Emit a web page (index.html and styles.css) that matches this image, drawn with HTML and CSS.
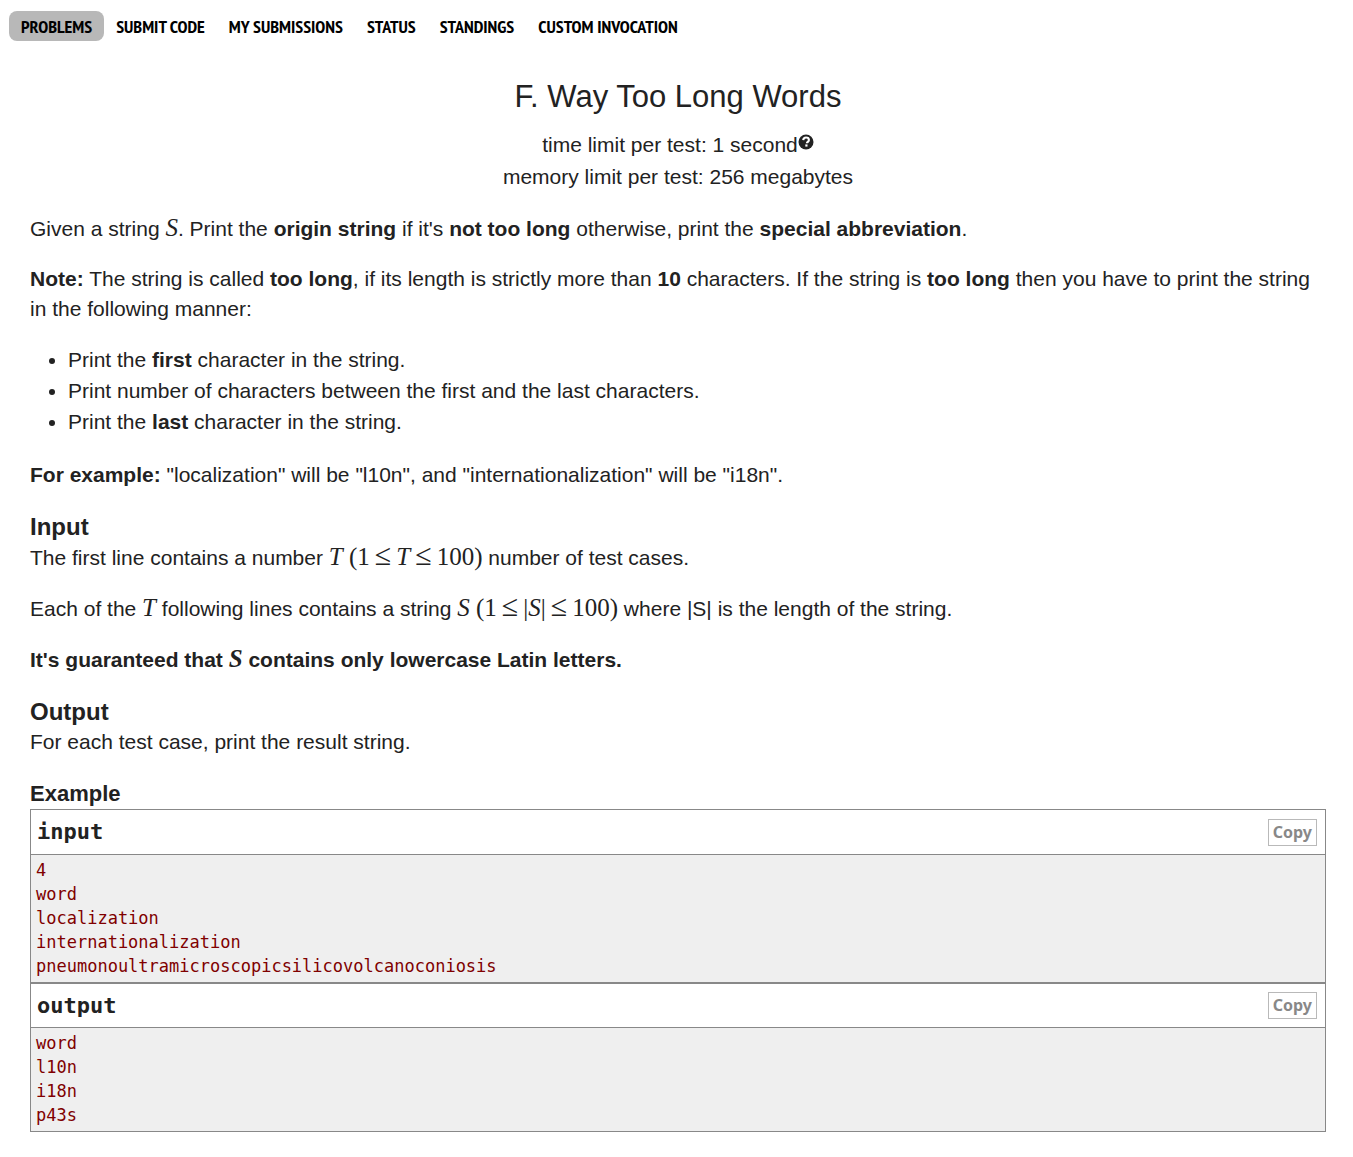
FILE: index.html
```html
<!DOCTYPE html>
<html lang="en">
<head>
<meta charset="utf-8">
<title>F. Way Too Long Words</title>
<link rel="stylesheet" href="styles.css">
</head>
<body>
<nav class="menu">
  <a class="menu-link current" href="#problems">PROBLEMS</a>
  <a class="menu-link" href="#submit">SUBMIT CODE</a>
  <a class="menu-link" href="#my">MY SUBMISSIONS</a>
  <a class="menu-link" href="#status">STATUS</a>
  <a class="menu-link" href="#standings">STANDINGS</a>
  <a class="menu-link" href="#invocation">CUSTOM INVOCATION</a>
</nav>
<main class="problem">
  <header class="problem-header">
    <h1 class="title">F. Way Too Long Words</h1>
    <div class="limit">time limit per test: 1 second<svg class="help" viewBox="0 0 16 16" role="img" aria-label="Help"><circle cx="8" cy="8" r="7.5" fill="#222"/><path d="M5.2 6.1C5.4 4.3 6.5 3.5 8 3.5c1.700 0 2.900 1 2.900 2.400 0 1.900-2 2-2 3.400" fill="none" stroke="#fff" stroke-width="2.100"/><rect x="7.300" y="10.400" width="2.200" height="2.200" fill="#fff"/></svg></div>
    <div class="limit">memory limit per test: 256 megabytes</div>
  </header>

  <section class="statement">
    <p>Given a string <i class="math">S</i>. Print the <b>origin string</b> if it's <b>not too long</b> otherwise, print the <b>special abbreviation</b>.</p>
    <p><b>Note:</b> The string is called <b>too long</b>, if its length is strictly more than <b>10</b> characters. If the string is <b>too long</b> then you have to print the string in the following manner:</p>
    <ul class="steps">
      <li>Print the <b>first</b> character in the string.</li>
      <li>Print number of characters between the first and the last characters.</li>
      <li>Print the <b>last</b> character in the string.</li>
    </ul>
    <p><b>For example:</b> "localization" will be "l10n", and "internationalization" will be "i18n".</p>
  </section>

  <section class="statement">
    <h2 class="section-title">Input</h2>
    <p>The first line contains a number <span class="math"><i>T</i> (1<span class="rel">≤</span><i>T</i><span class="rel">≤</span>100)</span> number of test cases.</p>
    <p>Each of the <i class="math">T</i> following lines contains a string <span class="math"><i>S</i> (1<span class="rel">≤</span>|<i>S</i>|<span class="rel">≤</span>100)</span> where |S| is the length of the string.</p>
    <p><b>It's guaranteed that <i class="math">S</i> contains only lowercase Latin letters.</b></p>
  </section>

  <section class="statement">
    <h2 class="section-title">Output</h2>
    <p>For each test case, print the result string.</p>
  </section>

  <section class="examples">
    <h2 class="example-title">Example</h2>
    <div class="sample">
      <div class="sample-head"><h3 class="sample-title">input</h3><button class="copy" type="button">Copy</button></div>
      <pre class="sample-text">4
word
localization
internationalization
pneumonoultramicroscopicsilicovolcanoconiosis</pre>
    </div>
    <div class="sample">
      <div class="sample-head"><h3 class="sample-title">output</h3><button class="copy" type="button">Copy</button></div>
      <pre class="sample-text">word
l10n
i18n
p43s</pre>
    </div>
  </section>
</main>
</body>
</html>
```
FILE: styles.css
```css
body {
  margin: 0;
  background: #fff;
  color: #222;
  font: 21px/30px "Liberation Sans", Arial, sans-serif;
}

.menu {
  display: flex;
  flex-wrap: wrap;
  padding: 11px 9px 0;
}

.menu-link {
  padding: 2px 12px 0;
  border-radius: 8px;
  color: #000;
  font: bold 18px/28px "PT Sans Narrow", "Liberation Sans Narrow", "Arial Narrow", sans-serif;
  text-decoration: none;
}

.menu-link.current {
  background: #b8b8b8;
}

.problem {
  padding: 36px 27px 24px 30px;
}

.problem-header {
  margin-bottom: 20px;
  text-align: center;
}

.title {
  margin: 0 0 12px;
  font-size: 31px;
  font-weight: normal;
  line-height: 40px;
}

.limit {
  line-height: 32px;
}

.help {
  width: 16px;
  height: 16px;
  vertical-align: 2px;
}

.statement {
  margin-bottom: 21px;
}

.statement p {
  margin: 0 0 20px;
}

.steps {
  margin: 0 0 23px;
  padding-left: 38px;
  line-height: 31px;
}

.section-title {
  margin: 0;
  font-size: 24px;
  line-height: 31px;
}

.math {
  font-family: "Liberation Serif", "Times New Roman", serif;
  font-size: 25px;
  line-height: 30px;
}

.rel {
  margin: 0 5px;
  font-size: 30px;
  line-height: 24px;
}

.example-title {
  margin: 0;
  font-size: 22px;
  line-height: 31px;
}

.sample {
  border: 1px solid #888;
}

.sample-head {
  display: flex;
  align-items: center;
  justify-content: space-between;
  height: 44px;
  padding: 0 8px 0 6px;
  border-bottom: 1px solid #888;
}

.sample + .sample .sample-head {
  height: 43px;
}

.sample-title {
  margin: 0;
  font: bold 22px/30px Consolas, "DejaVu Sans Mono", monospace;
}

.copy {
  padding: 0 4px;
  border: 1px solid #b9b9b9;
  background: #fff;
  color: #888;
  font: bold 16px/25px "Noto Sans", sans-serif;
}

.sample-text {
  margin: 0;
  padding: 3px 5px 4px;
  overflow-x: auto;
  background: #efefef;
  color: #800000;
  font: 17px/24px Consolas, "DejaVu Sans Mono", monospace;
}
```
